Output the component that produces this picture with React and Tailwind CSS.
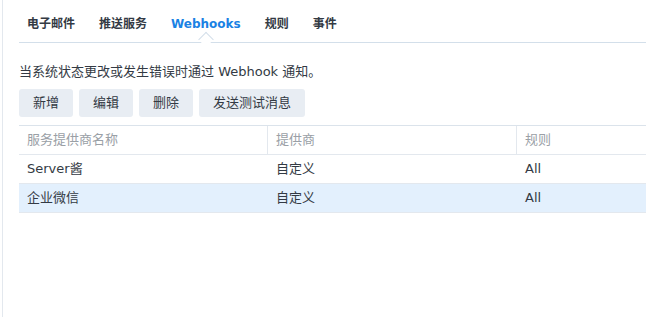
import React, { useState } from 'react';

const tabs = ['电子邮件', '推送服务', 'Webhooks', '规则', '事件'];

const rows = [
  { id: 1, name: 'Server酱', provider: '自定义', rule: 'All' },
  { id: 2, name: '企业微信', provider: '自定义', rule: 'All' },
];

const font = { fontFamily: '"DejaVu Sans", "Noto Sans CJK SC", sans-serif' };

const App = () => {
  const [activeTab] = useState('Webhooks');
  const [selected] = useState(2);

  return (
    <div className="w-[646px] h-[317px] bg-white text-[#333a44] overflow-hidden" style={font}>
      <div className="h-full ml-[2px] border-l border-[#e3e8ee] pl-[16px]">
        {/* Tabs */}
        <div className="relative flex h-[43px] border-b border-[#d3dfea] pl-[8px] pt-[15px] gap-[24px]">
          {tabs.map((tab) => (
            <div
              key={tab}
              className={`relative text-[12px] font-bold leading-[18px] ${activeTab === tab ? 'text-[#1a82e4]' : 'text-[#333a44]'}`}
            >
              {tab}
              {activeTab === tab && (
                <span className="absolute left-1/2 -translate-x-1/2 top-[19px] w-[11px] h-[11px] rotate-45 bg-white border-l border-t border-[#d3dfea]" />
              )}
            </div>
          ))}
        </div>

        {/* Description */}
        <p className="mt-[20px] text-[13px] leading-[18px]">当系统状态更改或发生错误时通过 Webhook 通知。</p>

        {/* Buttons */}
        <div className="flex gap-[6px] mt-[8px]">
          {['新增', '编辑', '删除', '发送测试消息'].map((b) => (
            <button
              key={b}
              className="h-[28px] px-[14px] rounded-[3px] bg-[#e8edf3] text-[13px] text-[#333a44]"
            >
              {b}
            </button>
          ))}
        </div>

        {/* Table */}
        <div className="mt-[8px] border-t border-[#dbe3eb] text-[13px]">
          <div className="grid grid-cols-[248px_249px_1fr] h-[29px] border-b border-[#e3e8ee] text-[#9aa0a6]">
            <div className="px-[8px] flex items-center">服务提供商名称</div>
            <div className="px-[8px] flex items-center border-l border-[#e3e8ee]">提供商</div>
            <div className="px-[8px] flex items-center border-l border-[#e3e8ee]">规则</div>
          </div>
          {rows.map((r) => (
            <div
              key={r.id}
              className={`grid grid-cols-[248px_249px_1fr] h-[29px] border-b border-[#e3e8ee] ${selected === r.id ? 'bg-[#e3f0fd] border-[#d6e2ee]' : ''}`}
            >
              <div className="px-[8px] flex items-center">{r.name}</div>
              <div className="px-[9px] flex items-center">{r.provider}</div>
              <div className="px-[9px] flex items-center">{r.rule}</div>
            </div>
          ))}
        </div>
      </div>
    </div>
  );
};

export default App;
